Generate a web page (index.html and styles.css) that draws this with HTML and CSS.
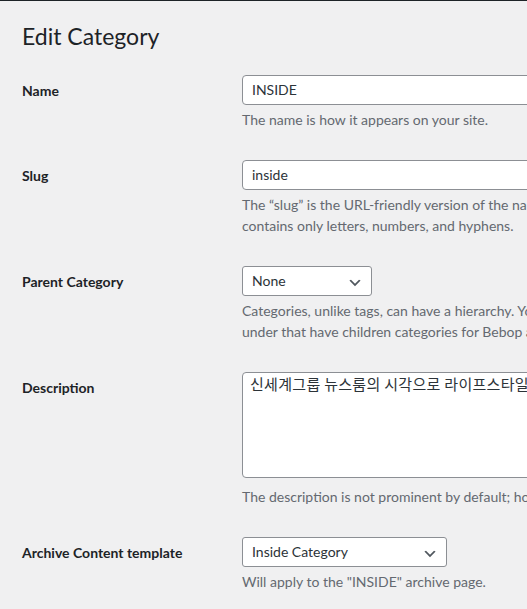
FILE: index.html
```html
<!DOCTYPE html>
<html lang="en">
<head>
<meta charset="utf-8">
<title>Edit Category</title>
<link rel="stylesheet" href="styles.css">
</head>
<body>
<div class="topbar"></div>
<div class="wrap">
  <h1 class="title">Edit Category</h1>
  <form class="edit-form">
    <table class="form-table">
      <tr>
        <th><label for="name">Name</label></th>
        <td>
          <input id="name" class="text-input" type="text" value="INSIDE">
          <p class="description">The name is how it appears on your site.</p>
        </td>
      </tr>
      <tr>
        <th><label for="slug">Slug</label></th>
        <td>
          <input id="slug" class="text-input" type="text" value="inside">
          <p class="description">The “slug” is the URL-friendly version of the name. It is usually all lowercase and<br>contains only letters, numbers, and hyphens.</p>
        </td>
      </tr>
      <tr>
        <th><label>Parent Category</label></th>
        <td>
          <div class="select select-parent"><span class="select-value">None</span><svg class="chevron" viewBox="0 0 20 20" width="16" height="16"><path d="M5 6l5 5 5-5 2 1-7 7-7-7 2-1z"/></svg></div>
          <p class="description">Categories, unlike tags, can have a hierarchy. You might have a Jazz category, and<br>under that have children categories for Bebop and Big Band. Totally optional.</p>
        </td>
      </tr>
      <tr>
        <th><label for="desc">Description</label></th>
        <td>
          <textarea id="desc" class="textarea">신세계그룹 뉴스룸의 시각으로 라이프스타일 트렌드와 인사이트를 전합니다.</textarea>
          <p class="description">The description is not prominent by default; however, some themes may show it.</p>
        </td>
      </tr>
      <tr>
        <th><label>Archive Content template</label></th>
        <td>
          <div class="select select-template"><span class="select-value">Inside Category</span><svg class="chevron" viewBox="0 0 20 20" width="16" height="16"><path d="M5 6l5 5 5-5 2 1-7 7-7-7 2-1z"/></svg></div>
          <p class="description">Will apply to the "INSIDE" archive page.</p>
        </td>
      </tr>
    </table>
  </form>
</div>
</body>
</html>
```

FILE: styles.css
```css
html, body {
  margin: 0;
  padding: 0;
  background: #f0f0f1;
  overflow: hidden;
}

body {
  font-family: "Segoe UI", Lato, "Noto Sans", "Noto Sans CJK KR", sans-serif;
  font-size: 14px;
  color: #3c434a;
}

.topbar {
  height: 1px;
  background: #1d2327;
}

.wrap {
  margin: 12px 0 0 22px;
  width: 1100px;
}

.title {
  margin: 0;
  padding: 9px 0 4px;
  font-size: 23px;
  font-weight: 400;
  line-height: 1.3;
  color: #1d2327;
}

.edit-form {
  margin: 4px 0 0;
}

.form-table {
  border-collapse: collapse;
  width: 100%;
}

.form-table th {
  width: 200px;
  padding: 22px 10px 19px 0;
  text-align: left;
  vertical-align: top;
  font-weight: 700;
  line-height: 1.3;
  color: #1d2327;
}

.form-table td {
  padding: 15px 10px;
  vertical-align: top;
  line-height: 1.3;
}

.text-input {
  display: block;
  box-sizing: border-box;
  width: 800px;
  height: 30px;
  margin: 0;
  padding: 0 9px;
  border: 1px solid #8c8f94;
  border-radius: 4px;
  background: #fff;
  font-family: inherit;
  font-size: 14px;
  color: #2c3338;
}

.textarea {
  display: block;
  box-sizing: border-box;
  width: 800px;
  height: 106px;
  margin: 0 0 8px;
  padding: 1px 7px;
  border: 1px solid #8c8f94;
  border-radius: 4px;
  background: #fff;
  font-family: "Noto Sans CJK KR", sans-serif;
  font-size: 15px;
  letter-spacing: 0.3px;
  line-height: 1.3;
  color: #2c3338;
  resize: none;
}

.select {
  position: relative;
  box-sizing: border-box;
  height: 30px;
  padding: 0 24px 0 9px;
  border: 1px solid #8c8f94;
  border-radius: 3px;
  background: #fff;
  color: #2c3338;
  display: flex;
  align-items: center;
}

.select-parent {
  width: 130px;
}

.select-template {
  width: 205px;
}

.chevron {
  position: absolute;
  right: 8px;
  top: 8px;
  fill: #50575e;
}

.description {
  margin: 4px 0 0;
  color: #646970;
  line-height: 1.5;
  white-space: nowrap;
}
```
